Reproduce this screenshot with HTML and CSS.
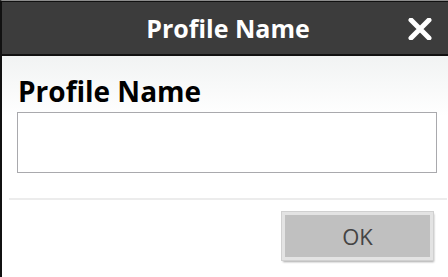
FILE: index.html
```html
<!DOCTYPE html>
<html lang="en">
<head>
  <meta charset="UTF-8" />
  <meta name="viewport" content="width=device-width, initial-scale=1" />
  <title>Profile Name</title>
  <link rel="stylesheet" href="styles.css">
</head>
<body>

  <div class="dialog">
    <!-- Barra de titulo -->
    <div class="titlebar">
      <span class="title">Profile Name</span>
      <button class="close" aria-label="Close">
        <svg width="24" height="22" viewBox="0 0 24 22">
          <path d="M3 2 L21 20 M21 2 L3 20" stroke="#fff" stroke-width="5" stroke-linecap="round" />
        </svg>
      </button>
    </div>

    <div class="content">
      <label class="label" for="profileName">Profile Name</label>
      <input type="text" id="profileName" class="field" />
    </div>

    <div class="separator"></div>

    <div class="actions">
      <button class="ok">OK</button>
    </div>
  </div>

</body>
</html>
```

FILE: styles.css
```css
body {
  font-family: 'Open Sans', 'Noto Sans', sans-serif;
  background-color: #fff;
  margin: 0;
  padding: 0;
}

.dialog {
  width: 448px;
  height: 277px;
  box-sizing: border-box;
  border-left: 2px solid #111;
  border-top: 1px solid #8c8c8c;
  background: #fff;
}

.titlebar {
  height: 52px;
  background: #3c3c3c;
  border-top: 1px solid #111;
  border-bottom: 2px solid #111;
  display: flex;
  align-items: center;
  justify-content: center;
  position: relative;
}

.title {
  color: #fff;
  font-size: 25px;
  font-weight: 700;
  margin-left: 6px;
}

.close {
  position: absolute;
  right: 16px;
  top: 16px;
  background: none;
  border: none;
  padding: 0;
  width: 24px;
  height: 22px;
  cursor: pointer;
}

.close svg {
  display: block;
}

.content {
  background: linear-gradient(#f1f3f3, #fff 60px);
  padding: 18px 11px 0 15px;
  display: flex;
  flex-direction: column;
}

.label {
  font-size: 28px;
  font-weight: 700;
  color: #000;
  line-height: 34px;
  margin-left: 1px;
}

.field {
  margin-top: 4px;
  height: 61px;
  box-sizing: border-box;
  border: 1px solid #a9a9ad;
  background: #fff;
  outline: none;
}

.separator {
  height: 2px;
  background: #ececec;
  margin: 25px 1px 0 7px;
}

.actions {
  display: flex;
  justify-content: flex-end;
  padding: 12px 15px 0 0;
}

.ok {
  width: 151px;
  height: 48px;
  background: #c0c0c0;
  border: 3px solid #e3e3e3;
  outline: 1px solid #d0d0d0;
  box-shadow: 1px 2px 2px rgba(0,0,0,0.35);
  font-family: 'Open Sans', 'Noto Sans', sans-serif;
  font-size: 22px;
  color: #444;
  cursor: pointer;
}
```
